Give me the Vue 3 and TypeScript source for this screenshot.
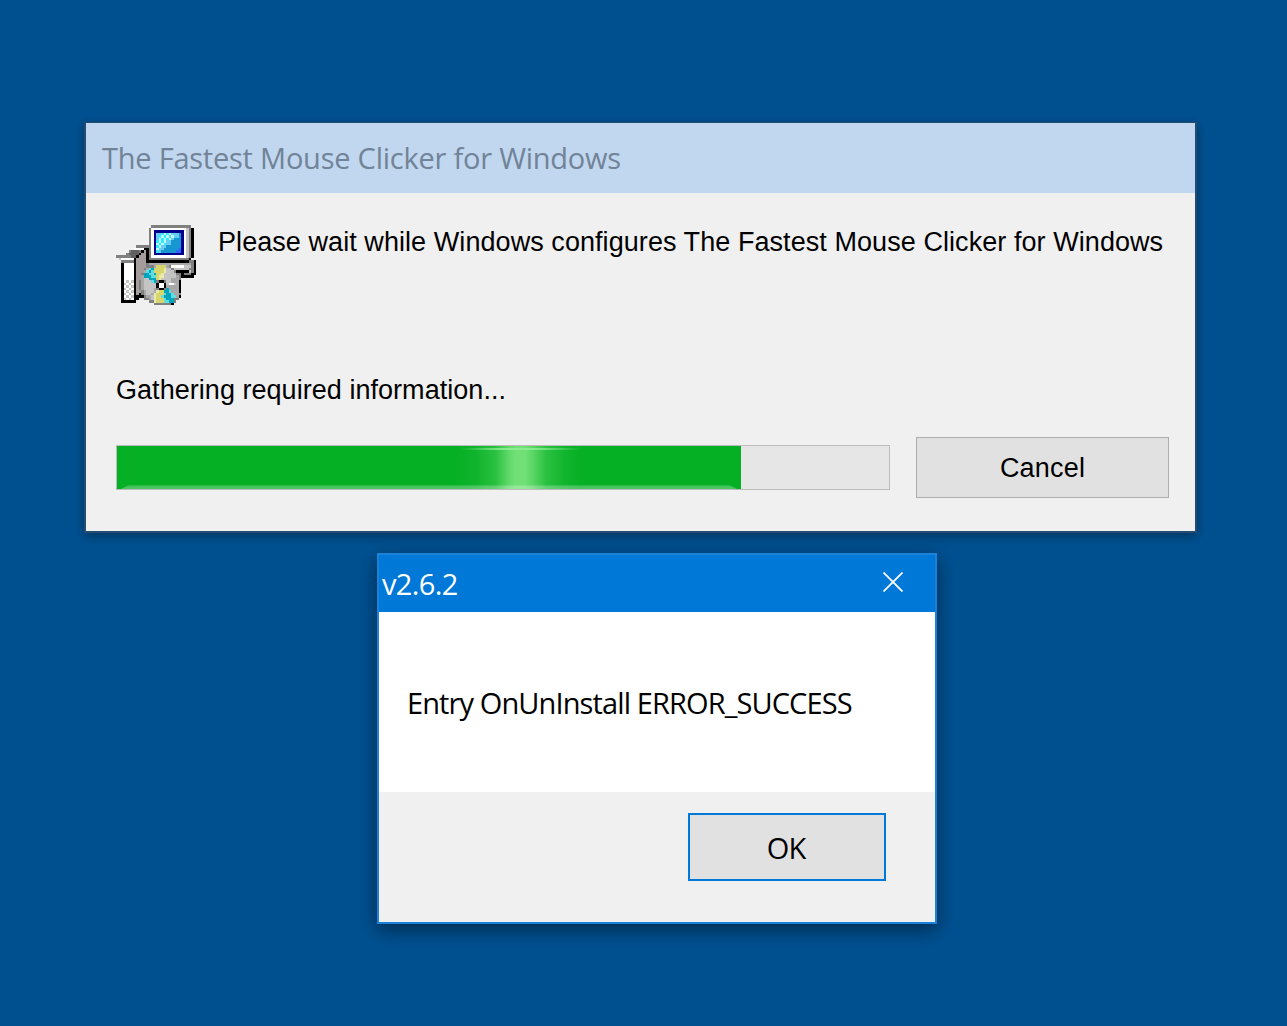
<script setup lang="ts">
const palette: Record<string, string> = {
  k: '#000000', w: '#ffffff', g: '#808080', l: '#c4c4c4', d: '#606060',
  h: '#a59c9c', n: '#000090', c: '#35e9ff', e: '#baffff', s: '#68cdf5',
  b: '#1797d1', u: '#3165ff', t: '#00a5bd', a: '#5fdde0', y: '#d6d66c',
  p: '#ebebad', m: '#a8a8a8',
}

// Installer icon, one character per pixel of a 32 x 32 grid
const bitmap: string[] = [
  '..............gggggggggggggggg..',
  '.............gwwwwwwwwwwwwwwlgk.',
  '.............gwnnnnnnnnnnnnwlgk.',
  '.............gwnsscecesssbnwlgk.',
  '.............gwnscecesessbnwlgk.',
  '.............gwnsececesbbbnwlgk.',
  '.............gwncecessbbbbnwlgk.',
  '.............gwnececssbbbbnwlgk.',
  '........ggggggwncessbbbbbbnwlgk.',
  '.......wwwwkkgwnessbbbbbbunwlgk.',
  '.....gdddgkhkgwncsbbbbbbuunwlgk.',
  '....gddddkhhkgwnnnnnnnnnnnnwlgk.',
  'ggggggddkhhhkgwwwwwwwwwwwwwwlgk.',
  '.lwwwwwkhhhhkggggggggggggggggk..',
  '..gggggkhhhhkkkkkkkkkkkkkkkkkggk',
  '..kwwwwkhhhhgmmmmmmmmmmmmmmmmmgk',
  '..kwwwwkhhhhgggmyyyymgwwwwwlllgk',
  '..kwwwwkhhhgmatyyyypllgllllllggk',
  '..kwwwwkhhhmatayyyyplllgkkkkklgk',
  '..kwwwwkhhgttaatyyplllllggkgggkk',
  '..kwwwwkhhmtttaaypplllllmgkkkkk.',
  '..kwwwwkhhmlltttypllllmmmg......',
  '..kwlwlkhgmlllatgkkgllmmmk......',
  '..klwlwkhgmlllllkwwklwwlmk......',
  '..kwlwlkhgmlllllkwwkmmmmmk......',
  '..klwlwkhgmllllmgkkgtmmmmk......',
  '..kwlwlkhhgmlllmpyyttammmk......',
  '..klwlwkhkgmllmpyyyattammg......',
  '..kwlwlkkkkgmmlpyyatttaamk......',
  '..klwlwkk..ggmlpyyyatttgg.......',
  '..kkkkkk.....ggpyyyaattg........',
  '...............gggggggk.........',
]
const pixels = bitmap.flatMap((row, y) =>
  [...row].map((key, x) => ({ x, y, fill: palette[key] })).filter((p) => p.fill),
)
</script>

<template>
  <main class="desktop">
    <section class="win installer">
      <header class="caption">The Fastest Mouse Clicker for Windows</header>
      <div class="body">
        <div class="intro">
          <svg class="icon" viewBox="0 0 32 32" width="80" height="80" shape-rendering="crispEdges" aria-hidden="true">
            <rect v-for="p in pixels" :key="p.y * 32 + p.x" :x="p.x" :y="p.y" width="1" height="1" :fill="p.fill" />
          </svg>
          <p class="wait">Please wait while Windows configures The Fastest Mouse Clicker for Windows</p>
        </div>
        <p class="status">Gathering required information...</p>
        <div class="actions">
          <div class="track"><div class="fill"><i class="glow"></i><i class="streak"></i><i class="base"></i></div></div>
          <button class="cancel" type="button">Cancel</button>
        </div>
      </div>
    </section>

    <section class="win message">
      <header class="bar">
        <span class="version">v2.6.2</span>
        <svg class="close" viewBox="0 0 20 20" width="20" height="20" aria-label="Close"><path d="M.5 .5l19 19M19.5 .5l-19 19" fill="none" stroke="#fff" stroke-width="1.8" /></svg>
      </header>
      <p class="text">Entry OnUnInstall ERROR_SUCCESS</p>
      <footer class="foot"><button class="ok" type="button">OK</button></footer>
    </section>
  </main>
</template>

<style>
body { margin: 0; background: #005090; }
</style>

<style scoped>
.desktop { box-sizing: border-box; width: 1287px; height: 1026px; padding-top: 122px; overflow: hidden; background: #005090; }
.win { box-sizing: border-box; }
p { margin: 0; white-space: nowrap; }
button { box-sizing: border-box; padding: 0; border-radius: 0; background: #e1e1e1; color: #000; }
.installer { width: 1113px; height: 411px; margin-left: 84px; border: 2px solid #244c72; border-top-width: 1px; background: #f0f0f0; box-shadow: 0 3px 10px rgba(0, 0, 0, .35); color: #000; font: 27px/32px "Liberation Sans", Arial, sans-serif; }
.caption { height: 70px; padding-left: 16px; background: #c0d7ef; color: #728397; font: 29px/69px "Open Sans", "Noto Sans", sans-serif; letter-spacing: -.23px; white-space: nowrap; }
.body { padding: 31px 0 0 30px; }
.intro { display: flex; gap: 22px; height: 80px; }
.icon { flex: none; margin-top: 1px; }
.wait { margin-top: 2px; letter-spacing: .065px; }
.status { margin-top: 70px; letter-spacing: .04px; }
.actions { display: flex; align-items: flex-start; margin-top: 31px; gap: 26px; }
.track { box-sizing: border-box; width: 774px; height: 45px; margin-top: 8px; border: 1px solid #bcbcbc; background: #e6e6e6; }
.fill { position: relative; width: 624px; height: 43px; overflow: hidden; background: #06b025; }
.glow { position: absolute; left: 340px; top: 0; width: 124px; height: 43px; background: linear-gradient(90deg, transparent, rgba(112, 224, 118, .1) 16%, rgba(112, 224, 118, .34) 31%, rgba(112, 224, 118, .85) 42%, #70e076 47%, #70e076 55%, rgba(112, 224, 118, .8) 61%, rgba(112, 224, 118, .35) 72%, rgba(112, 224, 118, .1) 87%, transparent); }
.streak { position: absolute; left: 344px; top: 2px; width: 120px; height: 2px; background: linear-gradient(90deg, transparent, rgba(143, 238, 148, .9) 35%, rgba(143, 238, 148, .9) 60%, transparent); }
.base { position: absolute; left: 4px; right: 4px; bottom: 0; height: 4px; background: linear-gradient(rgba(255, 255, 255, .1), rgba(255, 255, 255, .28) 50%); clip-path: polygon(8px 0, calc(100% - 8px) 0, 100% 100%, 0 100%); }
.cancel { width: 253px; height: 61px; border: 1px solid #adadad; font: 27px/57px "Liberation Sans", Arial, sans-serif; letter-spacing: .2px; padding-top: 2px; }
.message { width: 560px; height: 371px; margin: 20px 0 0 377px; border: 2px solid #1a82d9; background: #fff; box-shadow: 0 6px 18px rgba(0, 0, 0, .45); color: #000; font: 29px/40px "Open Sans", "Noto Sans", sans-serif; }
.bar { display: flex; justify-content: space-between; height: 57px; padding: 0 32px 0 3px; background: #0078d7; color: #fff; }
.version { line-height: 58px; letter-spacing: -.65px; }
.close { margin-top: 17px; }
.text { box-sizing: border-box; height: 180px; padding: 71px 0 0 28px; letter-spacing: -.89px; }
.foot { display: flex; justify-content: flex-end; align-items: flex-start; height: 130px; padding: 21px 49px 0 0; box-sizing: border-box; background: #f0f0f0; }
.ok { width: 198px; height: 68px; border: 2px solid #0078d7; font: 29px/62px "Open Sans", "Noto Sans", sans-serif; letter-spacing: -.9px; padding: 2px 2px 0 0; }
</style>
